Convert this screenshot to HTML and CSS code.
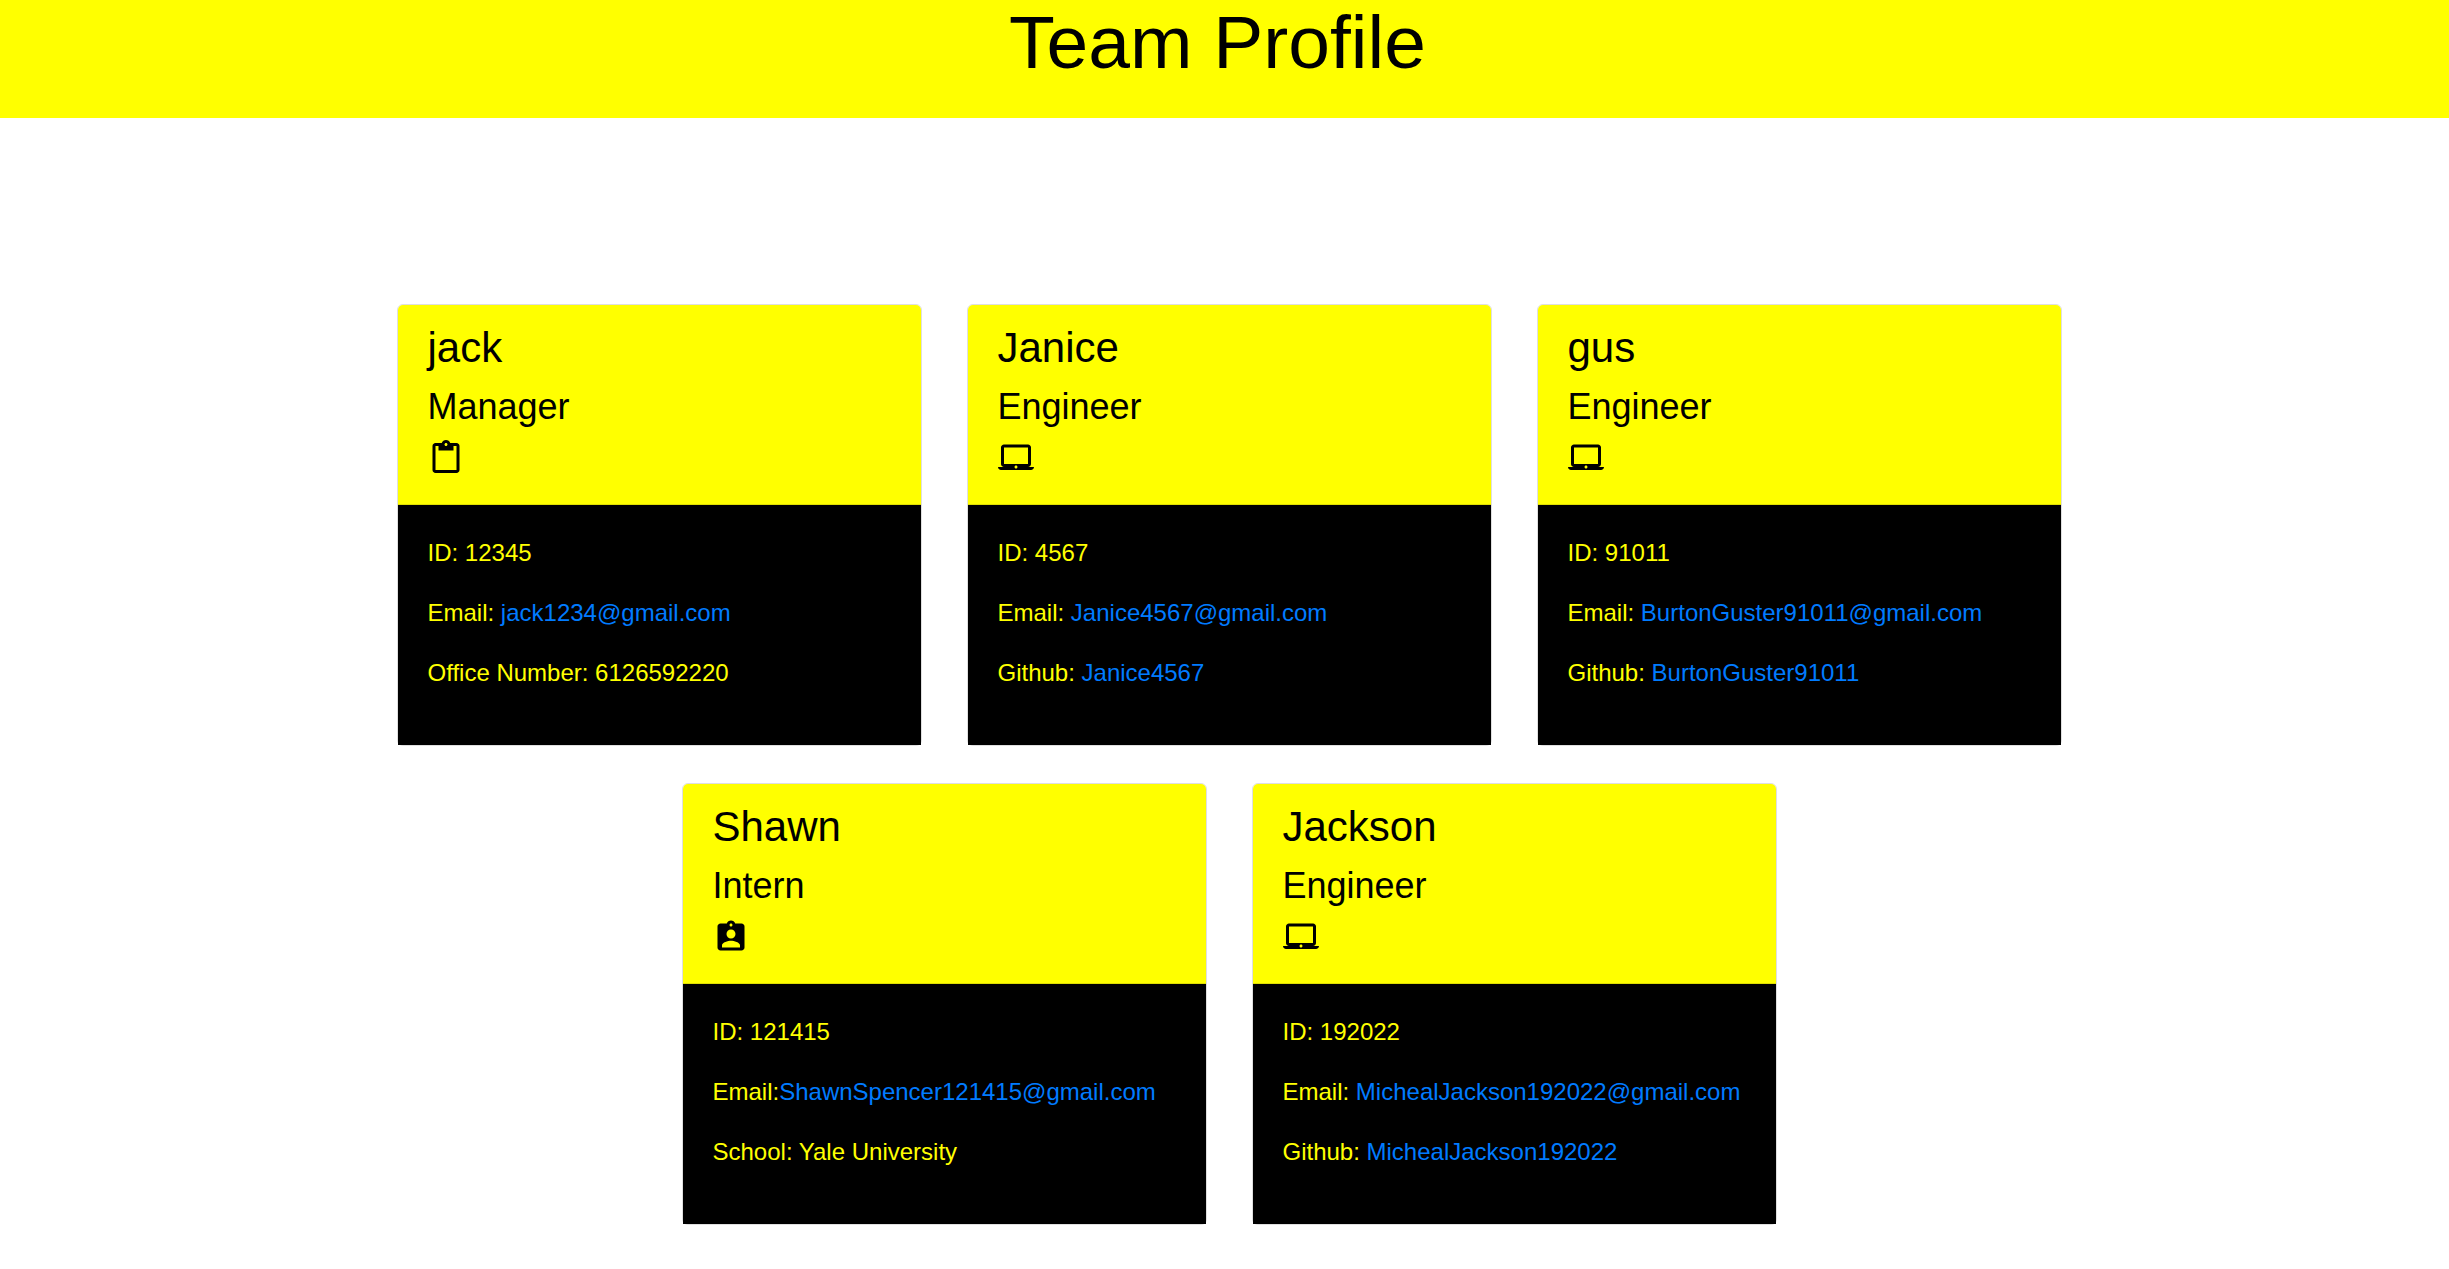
FILE: index.html
```html
<!DOCTYPE html>
<html lang="en">
<head>
  <meta charset="utf-8">
  <meta name="viewport" content="width=device-width, initial-scale=1">
  <title>Team Profile</title>
  <link rel="stylesheet" href="styles.css">
</head>
<body>
  <svg class="sprite" aria-hidden="true">
    <symbol id="clipboard" viewBox="0 0 24 24">
      <path d="M19 2h-4.180C14.400.840 13.300 0 12 0c-1.300 0-2.400.840-2.820 2H5c-1.100 0-2 .900-2 2v16c0 1.100.900 2 2 2h14c1.100 0 2-.900 2-2V4c0-1.100-.900-2-2-2zm-7 0c.550 0 1 .450 1 1s-.450 1-1 1-1-.450-1-1 .450-1 1-1zm7 18H5V4h2v3h10V4h2v16z"/>
    </symbol>
    <symbol id="laptop" viewBox="0 0 24 24">
      <path d="M20 18c1.100 0 1.990-.900 1.990-2L22 5c0-1.100-.900-2-2-2H4c-1.100 0-2 .900-2 2v11c0 1.100.900 2 2 2H0c0 1.100.900 2 2 2h20c1.100 0 2-.900 2-2h-4zM4 5h16v11H4V5zm8 14c-.550 0-1-.450-1-1s.450-1 1-1 1 .450 1 1-.450 1-1 1z"/>
    </symbol>
    <symbol id="badge" viewBox="0 0 24 24">
      <path d="M19 3h-4.180C14.400 1.840 13.300 1 12 1c-1.300 0-2.400.840-2.820 2H5c-1.100 0-2 .900-2 2v14c0 1.100.900 2 2 2h14c1.100 0 2-.900 2-2V5c0-1.100-.900-2-2-2zm-7 0c.550 0 1 .450 1 1s-.450 1-1 1-1-.450-1-1 .450-1 1-1zm0 4c1.660 0 3 1.340 3 3s-1.340 3-3 3-3-1.340-3-3 1.340-3 3-3zm6 12H6v-1.400c0-2 4-3.100 6-3.100s6 1.100 6 3.100V19z"/>
    </symbol>
  </svg>

  <header class="banner">
    <h1 class="banner-title">Team Profile</h1>
  </header>

  <main class="team">
    <article class="card">
      <div class="card-header">
        <h2 class="name">jack</h2>
        <h3 class="role">Manager</h3>
        <svg class="icon" aria-hidden="true"><use href="#clipboard"/></svg>
      </div>
      <div class="card-body">
        <p>ID: 12345</p>
        <p>Email: <a href="mailto:jack1234@gmail.com">jack1234@gmail.com</a></p>
        <p>Office Number: 6126592220</p>
      </div>
    </article>

    <article class="card">
      <div class="card-header">
        <h2 class="name">Janice</h2>
        <h3 class="role">Engineer</h3>
        <svg class="icon" aria-hidden="true"><use href="#laptop"/></svg>
      </div>
      <div class="card-body">
        <p>ID: 4567</p>
        <p>Email: <a href="mailto:Janice4567@gmail.com">Janice4567@gmail.com</a></p>
        <p>Github: <a href="https://github.com/Janice4567">Janice4567</a></p>
      </div>
    </article>

    <article class="card">
      <div class="card-header">
        <h2 class="name">gus</h2>
        <h3 class="role">Engineer</h3>
        <svg class="icon" aria-hidden="true"><use href="#laptop"/></svg>
      </div>
      <div class="card-body">
        <p>ID: 91011</p>
        <p>Email: <a href="mailto:BurtonGuster91011@gmail.com">BurtonGuster91011@gmail.com</a></p>
        <p>Github: <a href="https://github.com/BurtonGuster91011">BurtonGuster91011</a></p>
      </div>
    </article>

    <article class="card">
      <div class="card-header">
        <h2 class="name">Shawn</h2>
        <h3 class="role">Intern</h3>
        <svg class="icon" aria-hidden="true"><use href="#badge"/></svg>
      </div>
      <div class="card-body">
        <p>ID: 121415</p>
        <p>Email:<a href="mailto:ShawnSpencer121415@gmail.com">ShawnSpencer121415@gmail.com</a></p>
        <p>School: Yale University</p>
      </div>
    </article>

    <article class="card">
      <div class="card-header">
        <h2 class="name">Jackson</h2>
        <h3 class="role">Engineer</h3>
        <svg class="icon" aria-hidden="true"><use href="#laptop"/></svg>
      </div>
      <div class="card-body">
        <p>ID: 192022</p>
        <p>Email: <a href="mailto:MichealJackson192022@gmail.com">MichealJackson192022@gmail.com</a></p>
        <p>Github: <a href="https://github.com/MichealJackson192022">MichealJackson192022</a></p>
      </div>
    </article>
  </main>
</body>
</html>
```
FILE: styles.css
```css
* {
  box-sizing: border-box;
}

body {
  margin: 0;
  background: #fff;
  color: #000;
  font-family: "Liberation Sans", Arial, sans-serif;
  font-size: 24px;
  line-height: 36px;
}

h1,
h2,
h3,
p {
  margin: 0;
  font-weight: 400;
}

.sprite {
  display: none;
}

.banner {
  padding: 0 14px 34px 0;
  background: #ff0;
  text-align: center;
}

.banner-title {
  font-size: 75px;
  line-height: 84px;
}

.team {
  display: flex;
  flex-wrap: wrap;
  justify-content: center;
  gap: 37px 45px;
  max-width: 1740px;
  margin: 186px auto 40px;
  padding-left: 9px;
}

.card {
  width: 525px;
  max-width: 100%;
  border: 1px solid #dfdfdf;
  border-radius: 6px;
}

.card-header {
  display: flex;
  flex-direction: column;
  gap: 12px;
  padding: 18px 30px 28px;
  border-bottom: 1px solid #dfdf00;
  border-radius: 5px 5px 0 0;
  background: #ff0;
}

.name {
  font-size: 42px;
  line-height: 50px;
}

.role {
  font-size: 36px;
  line-height: 43px;
}

.icon {
  width: 36px;
  height: 36px;
}

.card-body {
  display: flex;
  flex-direction: column;
  gap: 24px;
  padding: 30px 30px 54px;
  background: #000;
  color: #ff0;
}

.card-body a {
  color: #007bff;
  text-decoration: none;
}
```
